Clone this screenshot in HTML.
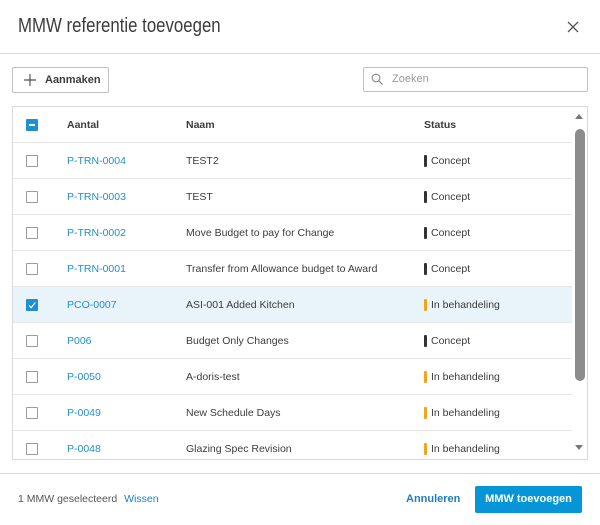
<!DOCTYPE html>
<html><head><style>
*{box-sizing:border-box;margin:0;padding:0}
body{width:600px;height:525px;background:#fff;font-family:"Liberation Sans",sans-serif;color:#3c3c3c;position:relative;overflow:hidden}
.abs{position:absolute}
.title{left:18px;top:15px;font-size:20px;color:#3c3c3c;transform:scaleX(0.84);transform-origin:left top;white-space:nowrap}
.x{left:566px;top:20px}
.hr{left:0;width:600px;height:1px;background:#d9d9d9}
.btn{left:12px;top:67px;width:97px;height:26px;border:1px solid #bfbfbf;border-radius:2px;font-size:11px;font-weight:bold;color:#3c3c3c;padding-left:32px;line-height:24px}
.search{left:363px;top:67px;width:225px;height:25px;border:1px solid #bfbfbf;border-radius:2px;font-size:11px;color:#999;padding-left:28px;line-height:23px}
.table{left:12px;top:106px;width:576px;height:354px;border:1px solid #d9d9d9;overflow:hidden}
.row{position:absolute;left:0;width:559px;height:36px;border-bottom:1px solid #e6e6e6;font-size:10.5px;line-height:36px}
.row span{position:absolute}
.cb{position:absolute;left:13px;top:12px;width:12px;height:12px;border:1px solid #9a9a9a;border-radius:1px;background:#fff}
.id{left:54px;color:#1e90d0}
.nm{left:173px}
.st{left:411px;padding-left:7px}
.st:before{content:"";position:absolute;left:0;top:12px;width:3px;height:12px;background:#333;border-radius:1px}
.st.o:before{background:#f7a21b}
.hd{font-weight:bold;font-size:10.5px;color:#3c3c3c}
</style></head><body>
<div class="abs title">MMW referentie toevoegen</div>
<svg class="abs x" width="14" height="14" viewBox="0 0 14 14"><path d="M2 2L12 12M12 2L2 12" stroke="#555" stroke-width="1.3"/></svg>
<div class="abs hr" style="top:53px"></div>
<div class="abs btn">Aanmaken</div>
<svg class="abs" style="left:24px;top:74px" width="12" height="12"><path d="M6 0V12M0 6H12" stroke="#555" stroke-width="1.2"/></svg>
<div class="abs search">Zoeken</div>
<svg class="abs" style="left:371px;top:73px" width="12" height="12"><circle cx="5" cy="5" r="3.8" fill="none" stroke="#888" stroke-width="1.1"/><path d="M8 8L11.5 11.5" stroke="#888" stroke-width="1.2"/></svg>
<div class="abs table">
 <div class="row hd" style="top:0;height:36px"><div class="cb" style="background:#1e90d0;border-color:#1e90d0"><div style="position:absolute;left:2px;top:4px;width:6px;height:2px;background:#fff"></div></div><span style="left:54px">Aantal</span><span style="left:173px">Naam</span><span style="left:411px">Status</span></div>
 <div class="row" style="top:36px"><div class="cb"></div><span class="id">P-TRN-0004</span><span class="nm">TEST2</span><span class="st">Concept</span></div>
 <div class="row" style="top:72px"><div class="cb"></div><span class="id">P-TRN-0003</span><span class="nm">TEST</span><span class="st">Concept</span></div>
 <div class="row" style="top:108px"><div class="cb"></div><span class="id">P-TRN-0002</span><span class="nm">Move Budget to pay for Change</span><span class="st">Concept</span></div>
 <div class="row" style="top:144px"><div class="cb"></div><span class="id">P-TRN-0001</span><span class="nm">Transfer from Allowance budget to Award</span><span class="st">Concept</span></div>
 <div class="row" style="top:180px;background:#e9f3fa"><div class="cb" style="background:#1e90d0;border-color:#1e90d0"><svg width="10" height="10" style="position:absolute;left:0;top:0"><path d="M2 5.5L4.2 7.6L8.3 2.5" stroke="#fff" stroke-width="1.2" fill="none"/></svg></div><span class="id">PCO-0007</span><span class="nm">ASI-001 Added Kitchen</span><span class="st o">In behandeling</span></div>
 <div class="row" style="top:216px"><div class="cb"></div><span class="id">P006</span><span class="nm">Budget Only Changes</span><span class="st">Concept</span></div>
 <div class="row" style="top:252px"><div class="cb"></div><span class="id">P-0050</span><span class="nm">A-doris-test</span><span class="st o">In behandeling</span></div>
 <div class="row" style="top:288px"><div class="cb"></div><span class="id">P-0049</span><span class="nm">New Schedule Days</span><span class="st o">In behandeling</span></div>
 <div class="row" style="top:324px"><div class="cb"></div><span class="id">P-0048</span><span class="nm">Glazing Spec Revision</span><span class="st o">In behandeling</span></div>
 <svg style="position:absolute;left:561px;top:6px" width="10" height="8"><path d="M1 6L5 1L9 6Z" fill="#777"/></svg>
 <div style="position:absolute;left:562px;top:22px;width:10px;height:252px;background:#8c8c8c;border-radius:5px"></div>
 <svg style="position:absolute;left:561px;top:337px" width="10" height="8"><path d="M1 1L5 6L9 1Z" fill="#777"/></svg>
</div>
<div class="abs hr" style="top:473px"></div>
<div class="abs" style="left:18px;top:493px;font-size:10.5px;color:#555">1 MMW geselecteerd <span style="color:#1e7fc0;margin-left:4px">Wissen</span></div>
<div class="abs" style="left:406px;top:493px;font-size:11px;font-weight:bold;color:#1e7fc0">Annuleren</div>
<div class="abs" style="left:475px;top:486px;width:107px;height:27px;background:#0696d7;border-radius:2px;color:#fff;font-size:11px;font-weight:bold;text-align:center;line-height:27px">MMW toevoegen</div>
</body></html>
